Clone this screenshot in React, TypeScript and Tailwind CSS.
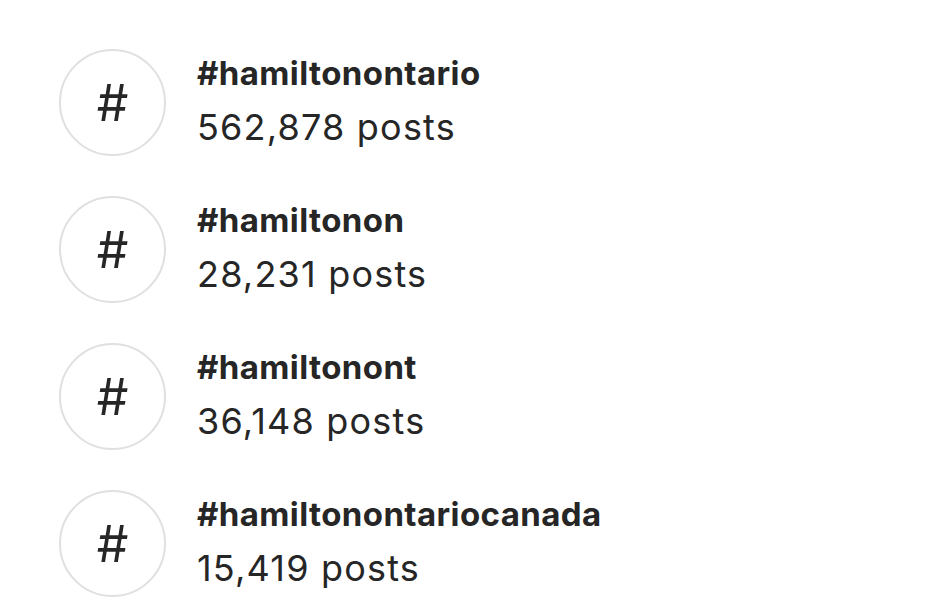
import React from 'react';

const tags = [
  { name: '#hamiltonontario', posts: '562,878' },
  { name: '#hamiltonon', posts: '28,231' },
  { name: '#hamiltonont', posts: '36,148' },
  { name: '#hamiltonontariocanada', posts: '15,419' },
];

export default function App() {
  return (
    <div className="min-h-screen w-[936px] bg-white pl-[59px] pt-[49px] text-[#262626]" style={{ fontFamily: 'Inter, "Liberation Sans", sans-serif' }}>
      <div className="flex flex-col gap-[40px]">
        {tags.map((t) => (
          <div key={t.name} className="flex items-start gap-[31px]">
            {/* hashtag circle */}
            <div className="flex h-[107px] w-[107px] shrink-0 items-center justify-center rounded-full border-2 border-[#e0e0e0]">
              <span className="text-[50px] font-normal leading-none">#</span>
            </div>
            <div className="mt-[8px] flex flex-col">
              <span className="text-[33px] font-bold leading-[33px] tracking-[0.4px]">{t.name}</span>
              <span className="mt-[19px] text-[36px] leading-[36px] tracking-[1.2px]">{t.posts} posts</span>
            </div>
          </div>
        ))}
      </div>
    </div>
  );
}
